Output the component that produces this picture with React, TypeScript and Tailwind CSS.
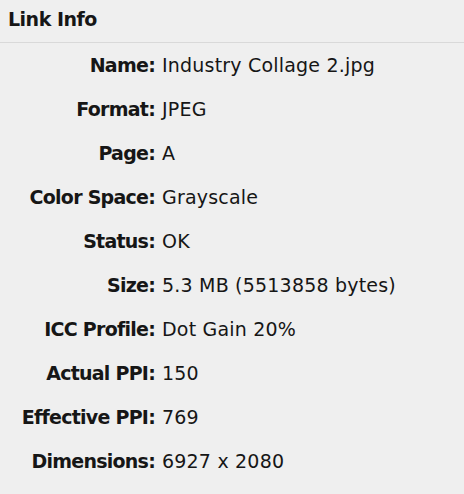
const rows: [string, string][] = [
  ['Name', 'Industry Collage 2.jpg'],
  ['Format', 'JPEG'],
  ['Page', 'A'],
  ['Color Space', 'Grayscale'],
  ['Status', 'OK'],
  ['Size', '5.3 MB (5513858 bytes)'],
  ['ICC Profile', 'Dot Gain 20%'],
  ['Actual PPI', '150'],
  ['Effective PPI', '769'],
  ['Dimensions', '6927 x 2080'],
];

export default function App() {
  return (
    <div className="h-[494px] w-[464px] overflow-hidden bg-[#efefef] font-['DejaVu_Sans',sans-serif] text-[19px] text-[#161616]">
      <div className="flex h-[43px] items-center border-b border-[#d9d9d9] pb-[4px] pl-2 font-bold tracking-[-0.5px]">
        Link Info
      </div>
      <div className="grid grid-cols-[155px_1fr] gap-x-[7px]">
        {rows.map(([label, value]) => (
          <div key={label} className="contents">
            <div className="flex h-[44px] items-center justify-end font-bold tracking-[-0.75px]">{label}:</div>
            <div className="flex h-[44px] items-center tracking-[0.2px]">{value}</div>
          </div>
        ))}
      </div>
    </div>
  );
}
